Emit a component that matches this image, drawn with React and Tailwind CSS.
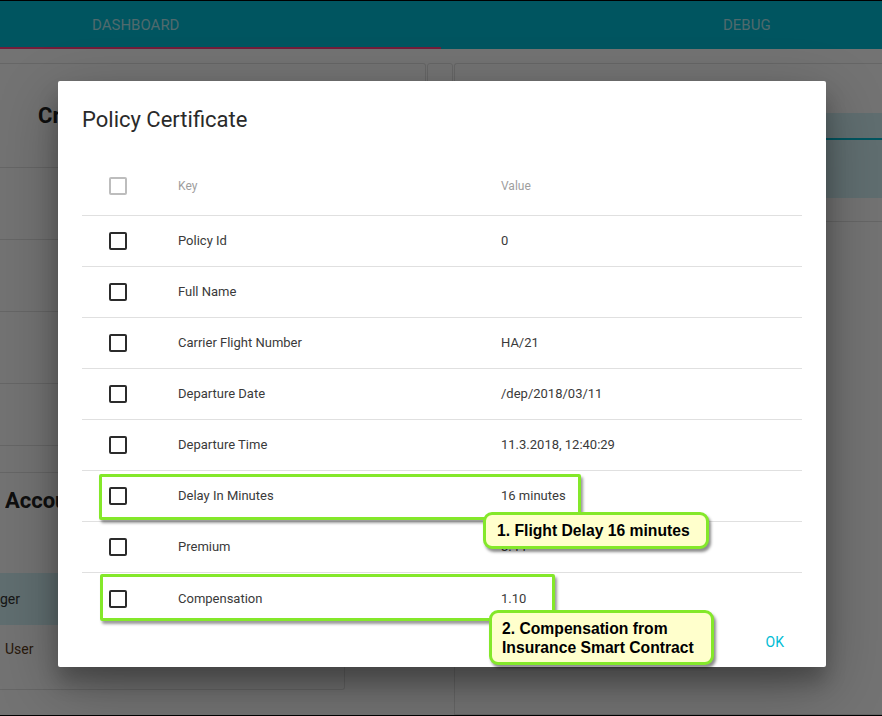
const rows = [
  { key: 'Policy Id', value: '0' },
  { key: 'Full Name', value: '' },
  { key: 'Carrier Flight Number', value: 'HA/21' },
  { key: 'Departure Date', value: '/dep/2018/03/11' },
  { key: 'Departure Time', value: '11.3.2018, 12:40:29' },
  { key: 'Delay In Minutes', value: '16 minutes' },
  { key: 'Premium', value: '3.44' },
  { key: 'Compensation', value: '1.10' },
];

const Box = ({ light }) => (
  <div
    className={`h-[18px] w-[18px] rounded-[2px] border-2 ${
      light ? 'border-[#bdbdbd]' : 'border-[#2b2b2b]'
    }`}
  ></div>
);

const App = () => {
  return (
    <div className="relative flex h-[716px] w-[882px] flex-col overflow-hidden bg-white font-['Roboto',sans-serif]">
      <div className="h-px bg-black"></div>

      {/* app bar with tabs */}
      <div className="flex h-[48px] bg-[#00bcd4] text-[15px] text-white/70">
        <div className="relative flex w-[441px] items-center pl-[92px]">
          DASHBOARD
          <div className="absolute bottom-0 left-0 h-[2px] w-full bg-[#ff4081]"></div>
        </div>
        <div className="flex flex-1 items-center pl-[282px]">DEBUG</div>
      </div>

      {/* page behind the dialog */}
      <div className="flex flex-1 gap-px pt-[14px]">
        <div className="flex w-[426px] flex-col gap-[7px]">
          <div className="h-[410px] rounded-r-[3px] border border-l-0 border-[#e2e2e2]">
            <div className="flex h-[104px] items-center border-b border-[#e2e2e2] pl-[38px]">
              <div className="w-[20px] overflow-hidden whitespace-nowrap text-[22px] font-bold text-[#222]">
                Create Policy
              </div>
            </div>
            <div className="h-[72px] border-b border-[#e2e2e2]"></div>
            <div className="h-[72px] border-b border-[#e2e2e2]"></div>
            <div className="h-[72px] border-b border-[#e2e2e2]"></div>
            <div className="h-[62px] border-b border-[#e2e2e2]"></div>
          </div>
          <div className="h-[210px] w-[345px] rounded-br-[3px] border border-l-0 border-t-0 border-[#e2e2e2]">
            <div className="flex h-[40px] items-center pl-[5px]">
              <div className="w-[53px] overflow-hidden whitespace-nowrap text-[22px] font-bold text-[#222]">
                Accounts
              </div>
            </div>
            <div className="h-[53px]"></div>
            <div className="flex h-[52px] items-center bg-[#d4f4f8] text-[14px] text-[#333]">
              ger
            </div>
            <div className="flex h-[48px] items-center pl-[5px] text-[14px] text-[#5a3a1a]">
              User
            </div>
          </div>
        </div>
        <div className="h-[40px] w-[26px] rounded-t-[3px] border border-[#e2e2e2]"></div>
        <div className="flex-1 rounded-tl-[3px] border border-r-0 border-[#e2e2e2]">
          <div className="h-[49px]"></div>
          <div className="h-[85px] bg-[#d4f4f8]">
            <div className="h-[25px]"></div>
            <div className="h-[2px] bg-[#00bcd4]"></div>
          </div>
          <div className="h-[24px] border-b border-[#e2e2e2]"></div>
        </div>
      </div>

      <div className="h-px bg-black"></div>

      {/* modal backdrop */}
      <div className="absolute inset-x-0 top-px bottom-px bg-black/55"></div>

      {/* dialog */}
      <div className="absolute left-[58px] top-[81px] flex h-[586px] w-[768px] flex-col rounded-[2px] bg-white shadow-[0_19px_60px_rgba(0,0,0,0.3),0_15px_20px_rgba(0,0,0,0.22)]">
        <div className="h-[76px] px-6 pt-[23px] text-[22px] leading-[32px] text-[#2a2a2a]">
          Policy Certificate
        </div>
        <div className="mx-6">
          <div className="grid h-[59px] grid-cols-[96px_323px_1fr] items-center border-b border-[#e0e0e0] text-[12px] text-[#9e9e9e]">
            <div className="pl-[27px]">
              <Box light />
            </div>
            <div>Key</div>
            <div>Value</div>
          </div>
          {rows.map((row, i) => (
            <div
              key={row.key}
              className={`grid h-[51px] grid-cols-[96px_323px_1fr] items-center text-[13px] text-[#3a3a3a] ${
                i < rows.length - 1 ? 'border-b border-[#e0e0e0]' : ''
              }`}
            >
              <div className="pl-[27px]">
                <Box />
              </div>
              <div>{row.key}</div>
              <div>{row.value}</div>
            </div>
          ))}
        </div>
        <div className="flex flex-1 items-start justify-end pr-[26px]">
          <button className="h-9 px-4 text-[14px] uppercase text-[#00bcd4]">
            OK
          </button>
        </div>
      </div>

      {/* annotations */}
      <div className="absolute left-[99px] top-[474px] h-[46px] w-[482px] rounded-[2px] border-[3px] border-[#84e82a] shadow-[2px_3px_3px_rgba(0,0,0,0.4)]"></div>
      <div className="absolute left-[483px] top-[512px] flex h-[37px] w-[226px] items-center rounded-[9px] border-[3px] border-[#84e82a] bg-[#ffffcc] pl-[11px] font-['Liberation_Sans',Arial,sans-serif] text-[15.7px] font-bold text-black shadow-[2px_3px_3px_rgba(0,0,0,0.45)]">
        1. Flight Delay 16 minutes
      </div>
      <div className="absolute left-[100px] top-[574px] h-[47px] w-[455px] rounded-[2px] border-[3px] border-[#84e82a] shadow-[2px_3px_3px_rgba(0,0,0,0.4)]"></div>
      <div className="absolute left-[489px] top-[610px] flex h-[55px] w-[225px] flex-col justify-center rounded-[9px] border-[3px] border-[#84e82a] bg-[#ffffcc] pl-[10px] font-['Liberation_Sans',Arial,sans-serif] text-[15.7px] font-bold leading-[19px] text-black shadow-[2px_3px_3px_rgba(0,0,0,0.45)]">
        <div>2. Compensation from</div>
        <div>Insurance Smart Contract</div>
      </div>
    </div>
  );
};

export default App;
